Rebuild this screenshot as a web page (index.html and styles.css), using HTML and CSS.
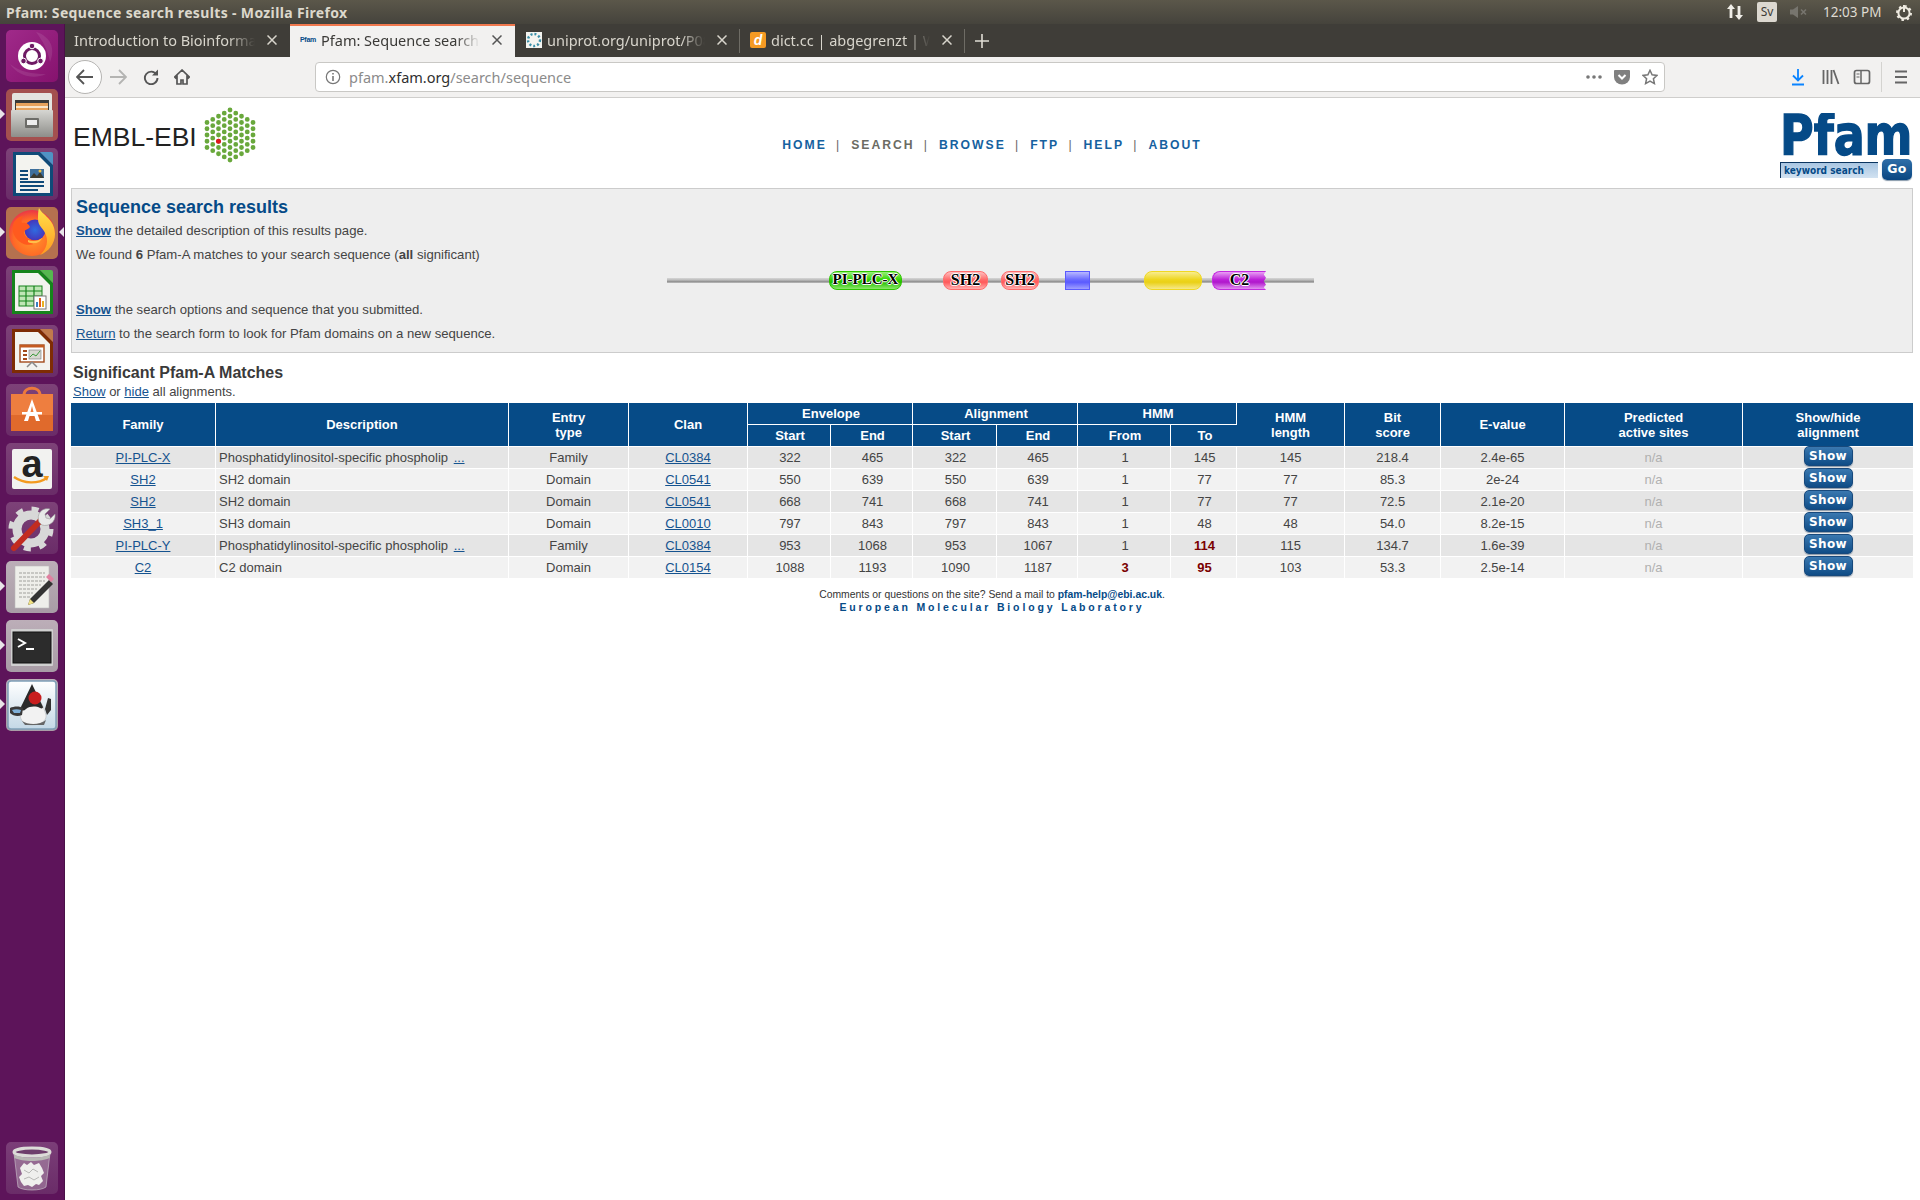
FILE: index.html
```html
<!DOCTYPE html>
<html lang="en">
<head>
<meta charset="utf-8">
<title>Pfam: Sequence search results - Mozilla Firefox</title>
<link rel="stylesheet" href="styles.css">
</head>
<body>
<div class="screen">
  <header class="panel">
    <div class="panel-title">Pfam: Sequence search results - Mozilla Firefox</div>
    <div class="indicators">
      <svg class="ind-arrows" width="18" height="20" viewBox="0 0 18 20"><path d="M5 2 1 7h2.6v9h2.8V7H9zM13 18l4-5h-2.6V4h-2.8v9H9z" fill="#f0eee8"/></svg>
      <span class="ind-lang">Sv</span>
      <svg class="ind-sound" width="18" height="14" viewBox="0 0 18 14"><path d="M0 4.500h3L8 1v12L3 9.500H0z" fill="#77756e"/><path d="m11 4.500 5 5m0-5-5 5" stroke="#77756e" stroke-width="1.600" fill="none"/></svg>
      <span class="ind-time">12:03 PM</span>
      <svg class="ind-gear" width="16" height="18" viewBox="0 0 16 18"><circle cx="8" cy="10" r="5.600" fill="none" stroke="#eeeae0" stroke-width="2"/><circle cx="8" cy="10" r="7" fill="none" stroke="#eeeae0" stroke-width="2" stroke-dasharray="2.500 3"/><path d="M8 2v7" stroke="#eeeae0" stroke-width="2"/></svg>
    </div>
  </header>
  <div class="desktop">
    <nav class="launcher">
      <div class="tile tile-ubuntu"><svg width="52" height="52" viewBox="0 0 52 52"><path d="M30 2c14 4 20 16 14 30-2-12-8-22-14-30z" fill="#ffffff18"/><path d="M4 34c8 12 24 16 36 10-14 0-26-2-36-10z" fill="#ffffff18"/><circle cx="26" cy="26" r="14" fill="#fff"/><circle cx="26" cy="26" r="7.500" fill="none" stroke="#6e1a64" stroke-width="3"/><circle cx="26" cy="16" r="2.800" fill="#6e1a64" stroke="#fff"/><circle cx="17.500" cy="31" r="2.800" fill="#6e1a64" stroke="#fff"/><circle cx="34.500" cy="31" r="2.800" fill="#6e1a64" stroke="#fff"/></svg></div>
      <div class="tile tile-files running"><svg width="52" height="52" viewBox="0 0 52 52"><defs><linearGradient id="cab" x1="0" y1="0" x2="0" y2="1"><stop offset="0" stop-color="#d6d6d2"/><stop offset="1" stop-color="#8e8e8a"/></linearGradient></defs><rect x="6" y="4" width="40" height="44" rx="2" fill="#e4e4e0"/><rect x="9" y="11" width="34" height="14" fill="#3b3a38"/><rect x="10" y="14" width="32" height="9" fill="#e8a35c"/><rect x="10" y="17" width="32" height="2" fill="#fbe6c8"/><rect x="5" y="21" width="42" height="27" rx="1" fill="url(#cab)"/><rect x="19" y="29" width="14" height="10" rx="1" fill="#6c6c68"/><rect x="21" y="31" width="10" height="5" fill="#eee"/></svg></div>
      <div class="tile tile-dim"><svg width="52" height="52" viewBox="0 0 52 52"><path d="M7 4h27l13 13v31H7z" fill="#0f4a78"/><path d="M34 4h11a2 2 0 0 1 2 2v11z" fill="#4f93c4"/><path d="M10 7h22l12 12v26H10z" fill="#f3f3ef"/><rect x="14" y="22" width="8" height="2" fill="#0f4a78"/><rect x="14" y="26" width="8" height="2" fill="#0f4a78"/><rect x="14" y="30" width="8" height="2" fill="#0f4a78"/><rect x="24" y="21" width="14" height="9" fill="#3d6f9c"/><path d="m24 30 4-5 3 3 3-4 4 6z" fill="#3a3a30"/><circle cx="34" cy="23" r="1.500" fill="#f0c040"/><rect x="14" y="33" width="24" height="2" fill="#0f4a78"/><rect x="14" y="37" width="24" height="2" fill="#0f4a78"/><rect x="14" y="41" width="18" height="2" fill="#0f4a78"/></svg></div>
      <div class="tile tile-firefox running running-right"><svg width="52" height="52" viewBox="0 0 52 52"><defs><radialGradient id="ffo" cx=".5" cy=".6" r=".62"><stop offset="0" stop-color="#ff9a2a"/><stop offset=".65" stop-color="#ff6a26"/><stop offset="1" stop-color="#e8304a"/></radialGradient><radialGradient id="ffb" cx=".5" cy=".5" r=".6"><stop offset="0" stop-color="#2f6ce0"/><stop offset="1" stop-color="#4a2ab4"/></radialGradient><linearGradient id="ffy" x1="0" y1="0" x2="0" y2="1"><stop offset="0" stop-color="#ffe14a"/><stop offset="1" stop-color="#ff9a20"/></linearGradient></defs><circle cx="26" cy="26" r="23" fill="url(#ffo)"/><circle cx="29" cy="23" r="10.500" fill="url(#ffb)"/><path d="M33 1c3 7 16 11 16 26 0 10-7 18-15 21 7-6 9-15 5-22-2-5-7-7-7-14 0-4 0-8 1-11z" fill="url(#ffy)"/><path d="M8 15c3-4 5-5 9-6-2 3-2 5-1 7 4-1 7 1 8 4-2 3-6 2-6 6 2 6 9 9 17 6-5 6-14 8-21 3C7 30 5 22 8 15z" fill="#ff5a1e"/><path d="M22 33c5 2 11 1 14-2-2 5-8 7-14 4z" fill="#ffc04a"/></svg></div>
      <div class="tile tile-dim"><svg width="52" height="52" viewBox="0 0 52 52"><path d="M6 4h28l13 13v31H6z" fill="#16841c"/><path d="M34 4h11a2 2 0 0 1 2 2v11z" fill="#55b84f"/><path d="M9 7h23l12 12v26H9z" fill="#f3f3ef"/><rect x="13" y="20" width="23" height="20" fill="#bfe6b5" stroke="#16841c"/><path d="M13 25h23M13 30h23M13 35h23M20 20v20M28 20v20" stroke="#16841c" stroke-width="1.200"/><rect x="28" y="30" width="12" height="13" fill="#fff" stroke="#777"/><rect x="30" y="36" width="2" height="5" fill="#3a7fc0"/><rect x="33" y="32" width="2" height="9" fill="#e05c20"/><rect x="36" y="35" width="2" height="6" fill="#e8b020"/></svg></div>
      <div class="tile tile-dim"><svg width="52" height="52" viewBox="0 0 52 52"><path d="M6 4h28l13 13v31H6z" fill="#7e2c04"/><path d="M34 4h11a2 2 0 0 1 2 2v11z" fill="#c07a4c"/><path d="M9 7h23l12 12v26H9z" fill="#f3f3ef"/><rect x="14" y="20" width="24" height="17" fill="#fff" stroke="#a34a1c" stroke-width="1.400"/><rect x="14" y="20" width="24" height="2.500" fill="#c45a20"/><rect x="17" y="25" width="4" height="2" fill="#a34a1c"/><rect x="17" y="29" width="4" height="2" fill="#a34a1c"/><rect x="17" y="33" width="4" height="2" fill="#a34a1c"/><rect x="23" y="25" width="12" height="9" fill="#d8d8d0" stroke="#777" stroke-width=".6"/><path d="m24 32 3-3 3 2 4-5" stroke="#3a9a3a" fill="none"/><path d="m26 37-5 5m5-5 5 5" stroke="#888" stroke-width="1.500"/></svg></div>
      <div class="tile tile-dim"><svg width="52" height="52" viewBox="0 0 52 52"><path d="M18 11c0-9 16-9 16 0" fill="none" stroke="#ec7a3c" stroke-width="3"/><rect x="5" y="10" width="42" height="37" fill="#ee7e3f"/><rect x="5" y="31" width="42" height="16" fill="#e06a2c"/><path d="M26 15 18 37h4l1.500-5h5l1.500 5h4zM24.500 28l1.500-6 1.500 6z" fill="#fff"/><rect x="16" y="28" width="20" height="2.500" fill="#fff"/></svg></div>
      <div class="tile tile-dim"><svg width="52" height="52" viewBox="0 0 52 52"><rect x="6" y="6" width="40" height="40" rx="2" fill="#f2f2f0"/><text x="26" y="34" class="amazon-a">a</text><path d="M8 34c10 7 24 7 33 1" fill="none" stroke="#f39a1f" stroke-width="2.400"/><path d="m37 33 6 0-2 5z" fill="#f39a1f"/></svg></div>
      <div class="tile tile-dim"><svg width="52" height="52" viewBox="0 0 52 52"><circle cx="25" cy="27" r="14" fill="none" stroke="#d8d8d8" stroke-width="9"/><circle cx="25" cy="27" r="20" fill="none" stroke="#d8d8d8" stroke-width="5" stroke-dasharray="7 8.700"/><path d="M8 46 36 17" stroke="#c22c20" stroke-width="6" stroke-linecap="round"/><path d="M33 20c-3-8 3-15 11-13l-5 5 1 4 4 1 5-5c1 8-6 13-13 11z" fill="#e8e8e8" stroke="#999" stroke-width=".6"/></svg></div>
      <div class="tile tile-light running"><svg width="52" height="52" viewBox="0 0 52 52"><rect x="9" y="5" width="34" height="42" fill="#eeeeea" stroke="#bbb" stroke-width=".6"/><path d="M13 12h26M13 16h26M13 20h26M13 24h22M13 28h18M13 32h14M13 36h12" stroke="#a0a09c" stroke-width="1" stroke-dasharray="3 1"/><path d="m24 38 19-19 4 4-19 19-6 2z" fill="#333"/><path d="m40 16 3-3 5 5-3 3z" fill="#e080a0"/><path d="m24 38 4 4-6 2z" fill="#f0e080"/></svg></div>
      <div class="tile tile-light running"><svg width="52" height="52" viewBox="0 0 52 52"><rect x="5" y="9" width="42" height="37" rx="1" fill="#d0d0d0"/><rect x="7" y="12" width="38" height="31" fill="#2c2c2c" stroke="#111"/><path d="m12 19 7 4-7 4" fill="none" stroke="#fff" stroke-width="2"/><rect x="20" y="28" width="8" height="2" fill="#fff"/></svg></div>
      <div class="tile tile-light running"><svg width="52" height="52" viewBox="0 0 52 52"><defs><linearGradient id="jv" x1="0" y1="0" x2="0" y2="1"><stop offset="0" stop-color="#ffffff"/><stop offset="1" stop-color="#c4d8e6"/></linearGradient></defs><rect x="2" y="2" width="48" height="48" rx="3" fill="url(#jv)" stroke="#7fa0b8" stroke-width="1.500"/><path d="M14 34c-1-6 4-12 9-13l11 1c3 5 5 10 6 14 1 6-6 10-14 10s-12-4-12-12z" fill="#f2f2f2" stroke="#bbb" stroke-width=".6"/><path d="M26 5 14 30c2 2 4 2 6 0 4-3 10-3 14-1 2 1 3 0 3-1z" fill="#2a2a2a"/><circle cx="29" cy="19" r="6.500" fill="#c81e1e"/><path d="M4 29c4-2 10-2 13 0l-1 7c-4 2-9 1-12-2z" fill="#3a3a3a"/><path d="M6 31c3-1 6-1 9 0l-1 3H8z" fill="#7fb0d8"/><path d="m42 19 3 1v11l-4 5-2-6z" fill="#333"/><path d="M16 42c6 4 18 4 24-1l-2 5H19z" fill="#666"/></svg></div>
      <div class="tile tile-trash"><svg width="52" height="52" viewBox="0 0 52 52"><path d="M8 11l4 34c5 4 23 4 28 0l4-34z" fill="#c8b8c6" fill-opacity=".4" stroke="#cfc6ce" stroke-opacity=".6"/><ellipse cx="26" cy="10" rx="18" ry="4" fill="#6e3f6c" stroke="#dcdcd8" stroke-width="3"/><path d="M8 12c6 5 30 5 36 0l-.5 4c-8 4-27 4-35 0z" fill="#b8b8b4"/><path d="M14 26l4-5 3 2 4-3 3 3 5-2 3 5 2 5-3 3 2 5-4 4-3-1-4 3-4-2-4 1-3-4-2-5 3-3z" fill="#efefed"/><path d="m18 28 5 3 4-4 5 3m-14 7 5-2 5 3 5-3" fill="none" stroke="#b8b8b6"/></svg></div>
    </nav>
    <main class="window">
      <div class="tabbar">
        <div class="tab">
          <span class="tab-title">Introduction to Bioinformatics</span>
          <svg class="tab-close" width="10" height="10" viewBox="0 0 10 10"><path d="m.5.500 9 9m0-9-9 9" stroke="#d8d5cc" stroke-width="1.500"/></svg>
        </div>
        <div class="tab tab-active">
          <span class="fav-pfam">Pfam</span>
          <span class="tab-title">Pfam: Sequence search results</span>
          <svg class="tab-close" width="10" height="10" viewBox="0 0 10 10"><path d="m.5.500 9 9m0-9-9 9" stroke="#555" stroke-width="1.500"/></svg>
        </div>
        <div class="tab tab-sep">
          <svg class="fav" width="16" height="16" viewBox="0 0 16 16"><rect width="16" height="16" fill="#f4f4f0"/><circle cx="8" cy="8" r="6" fill="none" stroke="#3a8fa8" stroke-width="2.400" stroke-dasharray="2 2"/></svg>
          <span class="tab-title">uniprot.org/uniprot/P08487</span>
          <svg class="tab-close" width="10" height="10" viewBox="0 0 10 10"><path d="m.5.500 9 9m0-9-9 9" stroke="#d8d5cc" stroke-width="1.500"/></svg>
        </div>
        <div class="tab tab-sep tab-last">
          <span class="fav-dict">d</span>
          <span class="tab-title">dict.cc | abgegrenzt | Wörterbuch</span>
          <svg class="tab-close" width="10" height="10" viewBox="0 0 10 10"><path d="m.5.500 9 9m0-9-9 9" stroke="#d8d5cc" stroke-width="1.500"/></svg>
        </div>
        <svg class="tab-new" width="14" height="14" viewBox="0 0 14 14"><path d="M7 0v14M0 7h14" stroke="#e0ddd4" stroke-width="1.600"/></svg>
      </div>
      <div class="navbar">
        <div class="nav-back"><svg width="18" height="16" viewBox="0 0 18 16"><path d="M8 1 1 8l7 7M1 8h16" fill="none" stroke="#555" stroke-width="1.800"/></svg></div>
        <svg class="nav-fwd" width="18" height="16" viewBox="0 0 18 16"><path d="m10 1 7 7-7 7M17 8H1" fill="none" stroke="#b4b4b2" stroke-width="1.800"/></svg>
        <svg class="nav-reload" width="16" height="16" viewBox="0 0 16 16"><path d="M13.500 5.500A6.300 6.300 0 1 0 14.500 9" fill="none" stroke="#555" stroke-width="1.900"/><path d="M15 .5v6H9z" fill="#555"/></svg>
        <svg class="nav-home" width="16" height="16" viewBox="0 0 16 16"><path d="M8 1 .8 8l1 1L3 8v7h4v-4h2v4h4V8l1.200 1 1-1z" fill="none" stroke="#555" stroke-width="1.700"/></svg>
        <div class="urlbar">
          <svg class="url-info" width="16" height="16" viewBox="0 0 16 16"><circle cx="8" cy="8" r="6.700" fill="none" stroke="#777" stroke-width="1.200"/><path d="M8 7v5M8 4v1.600" stroke="#777" stroke-width="1.600"/></svg>
          <span class="url-text">pfam.<b>xfam.org</b>/search/sequence</span>
          <div class="url-tools">
            <svg width="16" height="16" viewBox="0 0 16 16"><circle cx="2" cy="8" r="1.800" fill="#777"/><circle cx="8" cy="8" r="1.800" fill="#777"/><circle cx="14" cy="8" r="1.800" fill="#777"/></svg>
            <svg width="16" height="16" viewBox="0 0 16 16"><path d="M1 1h14a1 1 0 0 1 1 1v6a8 7.500 0 0 1-16 0V2a1 1 0 0 1 1-1z" fill="#808080"/><path d="m4.500 6 3.500 3.500L11.500 6" fill="none" stroke="#fff" stroke-width="2"/></svg>
            <svg width="16" height="16" viewBox="0 0 16 16"><path d="m8 1.300 2.100 4.500 4.900.6-3.600 3.300 1 4.900L8 12.200l-4.400 2.400 1-4.900L1 6.400l4.900-.6z" fill="none" stroke="#777" stroke-width="1.500"/></svg>
          </div>
        </div>
        <div class="nav-tools">
          <svg width="20" height="18" viewBox="0 0 20 18"><path d="M10 1v11M5 7.500l5 5 5-5M4 16.500h12" fill="none" stroke="#0a84ff" stroke-width="1.800"/></svg>
          <svg width="20" height="18" viewBox="0 0 20 18"><path d="M3.500 2v14M7.500 2v14M11.500 2v14M13.500 2l5 14" fill="none" stroke="#666" stroke-width="1.800"/></svg>
          <svg width="20" height="18" viewBox="0 0 20 18"><rect x="2.500" y="2.500" width="15" height="13" rx="2" fill="none" stroke="#666" stroke-width="1.700"/><path d="M9 3v12" stroke="#666" stroke-width="1.500"/><path d="M4.500 6h3M4.500 9h3" stroke="#666"/></svg>
          <span class="nav-sep"></span>
          <svg width="20" height="18" viewBox="0 0 20 18"><path d="M4 3.500h12M4 9h12M4 14.500h12" stroke="#666" stroke-width="1.800"/></svg>
        </div>
      </div>
      <div class="page">
        <div class="site-head">
          <div class="embl">
            <span class="embl-text">EMBL-EBI</span>
            <svg class="embl-hex" width="52" height="58" viewBox="0 0 52 58"><g fill="none" stroke="#69a83c" stroke-width="4.800" stroke-linecap="round" stroke-dasharray="0 6.250"><path d="M3 15.500V40.600"/><path d="M8.750 12.375V43.700"/><path d="M14.500 9.250V46.850"/><path d="M20.250 6.125V50"/><path d="M26 3V53.100"/><path d="M31.750 6.125V50"/><path d="M37.500 9.250V46.850"/><path d="M43.250 12.375V43.700"/><path d="M49 15.500V40.600"/></g><circle cx="14.500" cy="34.250" r="2.500" fill="#e0141c"/></svg>
          </div>
          <div class="site-nav">
            <a class="nav-link">HOME</a><i>|</i><a class="nav-link nav-current">SEARCH</a><i>|</i><a class="nav-link">BROWSE</a><i>|</i><a class="nav-link">FTP</a><i>|</i><a class="nav-link">HELP</a><i>|</i><a class="nav-link">ABOUT</a>
          </div>
          <div class="pfam-brand">
            <div class="pfam-logo"><span>Pfam</span></div>
            <div class="pfam-search"><span class="kw">keyword search</span><span class="go">Go</span></div>
          </div>
        </div>
        <section class="summary">
          <h1>Sequence search results</h1>
          <p><a class="link strong">Show</a> the detailed description of this results page.</p>
          <p>We found <b>6</b> Pfam-A matches to your search sequence (<b>all</b> significant)</p>
          <div class="graphic">
            <div class="backbone"></div>
            <div class="dom dom-green">PI-PLC-X</div>
            <div class="dom dom-red dom-sh1">SH2</div>
            <div class="dom dom-red dom-sh2">SH2</div>
            <div class="dom dom-blue"></div>
            <div class="dom dom-yellow"></div>
            <div class="dom dom-purple">C2</div>
          </div>
          <p><a class="link strong">Show</a> the search options and sequence that you submitted.</p>
          <p><a class="link">Return</a> to the search form to look for Pfam domains on a new sequence.</p>
        </section>
        <h2>Significant Pfam-A Matches</h2>
        <p class="toggle"><a class="link">Show</a> or <a class="link">hide</a> all alignments.</p>
        <table class="results">
          <colgroup>
            <col class="c1"><col class="c2"><col class="c3"><col class="c4"><col class="c5"><col class="c6"><col class="c7"><col class="c8"><col class="c9"><col class="c10"><col class="c11"><col class="c12"><col class="c13"><col class="c14"><col class="c15">
          </colgroup>
          <thead>
            <tr>
              <th rowspan="2">Family</th><th rowspan="2">Description</th><th rowspan="2">Entry<br>type</th><th rowspan="2">Clan</th>
              <th colspan="2" class="nudge">Envelope</th><th colspan="2" class="nudge">Alignment</th><th colspan="2" class="nudge">HMM</th>
              <th rowspan="2">HMM<br>length</th><th rowspan="2">Bit<br>score</th><th rowspan="2">E-value</th><th rowspan="2">Predicted<br>active sites</th><th rowspan="2">Show/hide<br>alignment</th>
            </tr>
            <tr class="sub"><th>Start</th><th>End</th><th>Start</th><th>End</th><th>From</th><th>To</th></tr>
          </thead>
          <tbody>
            <tr><td><a class="link">PI-PLC-X</a></td><td class="left">Phosphatidylinositol-specific phospholip <a class="link">...</a></td><td>Family</td><td><a class="link">CL0384</a></td><td>322</td><td>465</td><td>322</td><td>465</td><td>1</td><td>145</td><td>145</td><td>218.4</td><td>2.4e-65</td><td class="na">n/a</td><td class="act"><button class="show">Show</button></td></tr>
            <tr><td><a class="link">SH2</a></td><td class="left">SH2 domain</td><td>Domain</td><td><a class="link">CL0541</a></td><td>550</td><td>639</td><td>550</td><td>639</td><td>1</td><td>77</td><td>77</td><td>85.3</td><td>2e-24</td><td class="na">n/a</td><td class="act"><button class="show">Show</button></td></tr>
            <tr><td><a class="link">SH2</a></td><td class="left">SH2 domain</td><td>Domain</td><td><a class="link">CL0541</a></td><td>668</td><td>741</td><td>668</td><td>741</td><td>1</td><td>77</td><td>77</td><td>72.5</td><td>2.1e-20</td><td class="na">n/a</td><td class="act"><button class="show">Show</button></td></tr>
            <tr><td><a class="link">SH3_1</a></td><td class="left">SH3 domain</td><td>Domain</td><td><a class="link">CL0010</a></td><td>797</td><td>843</td><td>797</td><td>843</td><td>1</td><td>48</td><td>48</td><td>54.0</td><td>8.2e-15</td><td class="na">n/a</td><td class="act"><button class="show">Show</button></td></tr>
            <tr><td><a class="link">PI-PLC-Y</a></td><td class="left">Phosphatidylinositol-specific phospholip <a class="link">...</a></td><td>Family</td><td><a class="link">CL0384</a></td><td>953</td><td>1068</td><td>953</td><td>1067</td><td>1</td><td class="partial">114</td><td>115</td><td>134.7</td><td>1.6e-39</td><td class="na">n/a</td><td class="act"><button class="show">Show</button></td></tr>
            <tr><td><a class="link">C2</a></td><td class="left">C2 domain</td><td>Domain</td><td><a class="link">CL0154</a></td><td>1088</td><td>1193</td><td>1090</td><td>1187</td><td class="partial">3</td><td class="partial">95</td><td>103</td><td>53.3</td><td>2.5e-14</td><td class="na">n/a</td><td class="act"><button class="show">Show</button></td></tr>
          </tbody>
        </table>
        <footer class="foot">
          <div>Comments or questions on the site? Send a mail to <b>pfam-help@ebi.ac.uk</b>.</div>
          <div class="embl-name">European Molecular Biology Laboratory</div>
        </footer>
      </div>
    </main>
  </div>
</div>
</body>
</html>
```
FILE: styles.css
```css
* { box-sizing: border-box; }
html, body { margin: 0; padding: 0; }
body { width: 1920px; height: 1200px; overflow: hidden; font-family: "Liberation Sans", Arial, sans-serif; background: #fff; }
svg { display: block; flex: none; }
.screen { display: flex; flex-direction: column; width: 1920px; height: 1200px; }

/* top panel */
.panel { height: 24px; flex: none; display: flex; align-items: center; background: linear-gradient(#5b574a, #45433c); color: #dfdbd2; font-family: "Noto Sans", sans-serif; }
.panel-title { padding-left: 6px; font-size: 14px; letter-spacing: .35px; font-weight: 700; color: #dcd8cc; }
.indicators { margin-left: auto; display: flex; align-items: center; padding-right: 8px; }
.ind-arrows { margin-right: 13px; }
.ind-lang { width: 20px; height: 20px; margin-right: 13px; background: #dcd8d0; color: #3c3b37; border-radius: 2px; font-size: 12px; line-height: 20px; text-align: center; }
.ind-sound { margin-right: 15px; }
.ind-time { font-size: 13.500px; margin-right: 13px; color: #dfdbd2; white-space: nowrap; width: 60px; }
.ind-gear { margin-top: -1px; }

.desktop { flex: 1; display: flex; min-height: 0; }

/* launcher */
.launcher { width: 65px; flex: none; display: flex; flex-direction: column; gap: 7px; padding: 6px 7px 6px 6px; background: #5d145a; border-right: 1px solid #4a1048; }
.tile { position: relative; width: 52px; height: 52px; flex: none; border-radius: 5px; }
.tile-ubuntu { background: linear-gradient(135deg, #a02a8a, #86126e); }
.tile-files { background: #a4504f; }
.tile-dim { background: linear-gradient(#7d4278, #6a2c68); }
.tile-firefox { background: #b5714f; }
.tile-light { background: linear-gradient(#bcaeb8, #a89ca6); }
.tile-trash { margin-top: auto; background: linear-gradient(#7b3e78, #6a2c68); }
.running::before { content: ""; position: absolute; left: -6px; top: 20px; border: 5px solid transparent; border-left: 5px solid #e8e4e8; border-right: 0; }
.running-right::after { content: ""; position: absolute; right: -6px; top: 20px; border: 5px solid transparent; border-right: 5px solid #e8e4e8; border-left: 0; }
.amazon-a { font-family: "Liberation Sans", sans-serif; font-weight: 700; font-size: 38px; text-anchor: middle; fill: #222; }

.window { flex: 1; min-width: 0; display: flex; flex-direction: column; }

/* tabs */
.tabbar { height: 33px; flex: none; display: flex; align-items: center; background: #3f3d38; font-family: "Noto Sans", sans-serif; font-size: 14.500px; color: #d8d5cc; }
.tab { position: relative; width: 225px; height: 33px; flex: none; display: flex; align-items: center; padding: 0 13px 2px 9px; gap: 5px; }
.tab-title { flex: 1; min-width: 0; overflow: hidden; white-space: nowrap; -webkit-mask-image: linear-gradient(90deg, #000 85%, transparent 100%); mask-image: linear-gradient(90deg, #000 85%, transparent 100%); margin-right: 7px; }
.tab-active { background: #f2f1f0; color: #3b3a37; border-top: 2px solid #f0784e; padding-left: 10px; padding-bottom: 4px; }
.tab-sep::after { content: ""; position: absolute; right: 0; top: 5px; bottom: 4px; width: 1px; background: #6e6c65; }
.fav-pfam { width: 16px; font-size: 7px; font-weight: 700; color: #054a87; font-family: "Liberation Sans", sans-serif; letter-spacing: -.3px; }
.tab-sep:not(.tab-last) .fav { margin-left: 2px; }
.fav-dict { width: 16px; height: 16px; margin-left: 1px; background: #f59a23; color: #fff; border-radius: 2px; font: italic 700 14px/16px "Liberation Sans", sans-serif; text-align: center; }
.tab-new { margin-left: 10px; }

/* navbar */
.navbar { height: 41px; flex: none; display: flex; align-items: center; background: #f2f1f0; border-bottom: 1px solid #cfcecc; padding-left: 3px; }
.nav-back { width: 34px; height: 34px; border-radius: 50%; background: #fff; border: 1px solid #b5b4b2; display: flex; align-items: center; justify-content: center; flex: none; }
.nav-fwd { margin-left: 7px; }
.nav-reload { margin-left: 16px; }
.nav-home { margin-left: 15px; }
.urlbar { width: 1350px; height: 30px; margin-left: 125px; flex: none; display: flex; align-items: center; background: #fff; border: 1px solid #c9c8c5; border-radius: 4px; padding: 0 6px 0 9px; font-family: "Noto Sans", sans-serif; font-size: 14.500px; color: #8b8b8b; }
.url-text { margin-left: 8px; white-space: nowrap; }
.url-text b { font-weight: 400; color: #2f2f2f; }
.url-tools { margin-left: auto; display: flex; gap: 12px; }
.nav-tools { margin-left: auto; display: flex; align-items: center; gap: 12px; padding-right: 9px; }
.nav-sep { width: 1px; height: 30px; background: #d4d3d0; margin: 0 -3px; }

/* page */
.page { flex: 1; min-height: 0; background: #fff; padding: 0 7px 0 6px; color: #444; font-size: 13px; }
.site-head { height: 90px; display: grid; grid-template-columns: 1fr auto 1fr; }
.embl { display: flex; align-items: flex-start; padding: 9px 0 0 2px; gap: 7.500px; }
.embl-text { font-size: 26.500px; line-height: 30px; color: #222; margin-top: 15px; }
.site-nav { display: flex; align-items: flex-start; padding-top: 39px; font-size: 12.200px; line-height: 16px; font-weight: 700; letter-spacing: 2px; color: #054a87; white-space: nowrap; }
.site-nav i { font-style: normal; font-weight: 400; color: #666; padding: 0 10px 0 9.200px; }
.nav-link { color: #16619f; }
.nav-current { color: #6b6b63; }
.pfam-brand { justify-self: end; display: flex; flex-direction: column; align-items: flex-end; padding-top: 15px; }
.pfam-logo { width: 133px; height: 44px; overflow: hidden; line-height: 44px; text-align: left; }
.pfam-logo span { display: inline-block; font: 700 56px/44px "DejaVu Sans", sans-serif; color: #054a87; transform: scaleX(.82); transform-origin: left center; -webkit-text-stroke: 1.500px #054a87; }
.pfam-search { display: flex; align-items: center; gap: 4px; margin: 2px 1px 0 0; }
.kw { width: 98px; height: 16px; background: linear-gradient(#a9c6e2, #d2e2f1); border-top: 1px solid #0b3560; border-left: 1px solid #0b3560; color: #054a87; font: 700 10px/15px "DejaVu Sans Condensed", "DejaVu Sans", sans-serif; padding-left: 3px; white-space: nowrap; }
.go { width: 30px; height: 21px; border-radius: 5px; background: linear-gradient(#2f6fa9, #0a4681); color: #fff; font: 700 12.500px/20px "DejaVu Sans", sans-serif; letter-spacing: .4px; text-align: center; box-shadow: 0 1px 1px #8899aa; }

.summary { height: 165px; background: #eee; border: 1px solid #ccc; padding: 7px 4px 0 4px; }
.summary h1 { margin: 0; font-size: 18px; line-height: 23px; color: #054a87; font-weight: 700; }
.summary p { margin: 0; line-height: 24px; font-size: 13.150px; color: #444; }
.link { color: #15538f; text-decoration: underline; }
.strong { font-weight: 700; }

.graphic { position: relative; height: 31px; }
.backbone { position: absolute; left: 591px; top: 11px; width: 647px; height: 5px; background: linear-gradient(#d6d6d6 0%, #bcbcbc 40%, #8e8e8e 75%, #c4c4c4 100%); }
.dom { position: absolute; top: 4px; height: 19px; border-radius: 8px; border: 1px solid; font: 700 16px/15px "Liberation Serif", serif; color: #000; text-align: center; text-shadow: 1px 0 0 #fff, -1px 0 0 #fff, 0 1px 0 #fff, 0 -1px 0 #fff; }
.dom-green { left: 753px; width: 73px; font-size: 15px; border-color: #2ec400; background: linear-gradient(#9af07a, #33d400 45%, #22c000 60%, #8de86a); }
.dom-red { border-color: #ff6c6c; background: linear-gradient(#ffc0c0, #ff6a6a 45%, #ff5a5a 60%, #ffb0b0); }
.dom-sh1 { left: 867px; width: 45px; }
.dom-sh2 { left: 925px; width: 38px; }
.dom-blue { left: 989px; width: 25px; border-radius: 0; border-color: #5a5aff; background: linear-gradient(#b8b8ff, #6a6aff 45%, #5a5aff 60%, #a0a0ff); }
.dom-yellow { left: 1068px; width: 58px; border-color: #f0d820; background: linear-gradient(#f8ec90, #eed61e 45%, #ead016 60%, #f6e88a); }
.dom-purple { left: 1136px; width: 54px; border-radius: 8px 0 0 8px; border-right: 0; border-color: #c428e0; background: linear-gradient(#e8a0f4, #bc20d8 45%, #b018cc 60%, #e090f0); clip-path: polygon(0 0, 100% 0, 96% 18%, 100% 36%, 96% 54%, 100% 72%, 96% 86%, 100% 100%, 0 100%); }

h2 { margin: 0; padding: 9px 0 0 2px; font-size: 16px; line-height: 21px; color: #3a3a3a; font-weight: 700; }
.toggle { margin: 0; padding: 1px 0 0 2px; font-size: 13px; line-height: 16px; color: #444; }

.results { width: 1842px; margin-top: 3px; table-layout: fixed; border-collapse: separate; border-spacing: 0; font-size: 13px; }
.c1 { width: 145px; } .c2 { width: 293px; } .c3 { width: 120px; } .c4 { width: 119px; } .c5 { width: 83px; }
.c6 { width: 82px; } .c7 { width: 84px; } .c8 { width: 81px; } .c9 { width: 93px; } .c10 { width: 66px; }
.c11 { width: 108px; } .c12 { width: 96px; } .c13 { width: 124px; } .c14 { width: 178px; } .c15 { width: 170px; }
.results th { height: 22px; padding: 0; background: #064b87; color: #fff; font-size: 13px; line-height: 15px; font-weight: 700; text-align: center; border-right: 1px solid #fff; border-bottom: 1px solid #fff; }
.results th:last-child { border-right: 0; }
.results th.nudge, .results .sub th { padding-left: 2px; }
.results td { height: 22px; padding: 0; text-align: center; line-height: 15px; color: #444; border-right: 1px solid #fff; border-bottom: 1px solid #fff; vertical-align: middle; white-space: nowrap; overflow: visible; }
.results td:nth-child(n+5):nth-child(-n+10) { padding-left: 2px; }
.results td:last-child { border-right: 0; }
.results tbody tr:nth-child(odd) td { background: #e5e5e5; }
.results tbody tr:nth-child(even) td { background: #f2f2f2; }
.results td.left { text-align: left; padding-left: 3px; }
.results td.left .link { margin-left: 2px; }
.results td.na { color: #b0b0b0; }
.results td.partial { color: #7a0000; font-weight: 700; }
.results td.act { vertical-align: top; }
.show { display: block; width: 49px; height: 20px; margin: -1px auto 0; padding: 0; border: 1px solid #17497c; border-radius: 5px; background: linear-gradient(#3a78b0, #0f4c86); color: #fff; font: 700 12px/17px "DejaVu Sans", sans-serif; letter-spacing: .35px; box-shadow: 0 1px 1px #8a98a8; }

.foot { margin-top: 9px; text-align: center; font-size: 10.400px; line-height: 13px; color: #333; }
.foot b { color: #054a87; }
.embl-name { font-weight: 700; color: #054a87; font-size: 10.500px; letter-spacing: 2.850px; }
```
